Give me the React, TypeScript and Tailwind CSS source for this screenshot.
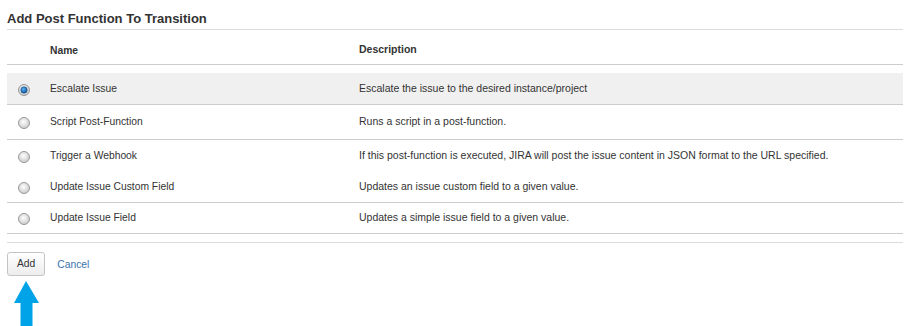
import React, { useState } from 'react';

const rows = [
  { name: 'Escalate Issue', desc: 'Escalate the issue to the desired instance/project', h: 'h-[32px]', border: true },
  { name: 'Script Post-Function', desc: 'Runs a script in a post-function.', h: 'h-[35px]', border: true },
  { name: 'Trigger a Webhook', desc: 'If this post-function is executed, JIRA will post the issue content in JSON format to the URL specified.', h: 'h-[31px]', border: false },
  { name: 'Update Issue Custom Field', desc: 'Updates an issue custom field to a given value.', h: 'h-[32px]', border: true },
  { name: 'Update Issue Field', desc: 'Updates a simple issue field to a given value.', h: 'h-[31px]', border: true },
];

const Radio = ({ checked }: { checked: boolean }) => (
  <svg width="12" height="12" viewBox="0 0 12 12">
    <defs>
      <radialGradient id="off" cx="45%" cy="40%" r="65%">
        <stop offset="0%" stopColor="#ffffff" />
        <stop offset="100%" stopColor="#c4c4c4" />
      </radialGradient>
      <radialGradient id="dot" cx="40%" cy="35%" r="70%">
        <stop offset="0%" stopColor="#5ab0f0" />
        <stop offset="100%" stopColor="#0a4f96" />
      </radialGradient>
    </defs>
    <circle cx="6" cy="6" r="5.5" fill="url(#off)" stroke="#9a9a9a" strokeWidth="1" />
    {checked && <circle cx="6" cy="6" r="3.2" fill="url(#dot)" stroke="#1c4f80" strokeWidth="0.6" />}
  </svg>
);

export default function App() {
  const [selected, setSelected] = useState(0);

  return (
    <div className="w-[909px] h-[326px] bg-white pl-[7px] pr-[6px] text-[10.3px] text-[#333] overflow-hidden" style={{ fontFamily: '"Liberation Sans", Arial, sans-serif' }}>
      <div className="h-[30px] border-b border-[#dcdcdc] flex items-end pb-[4px]">
        <h2 className="text-[13px] font-bold text-[#333] leading-none">Add Post Function To Transition</h2>
      </div>

      {/* header */}
      <div className="h-[35px] border-b border-[#cccccc] flex items-end pb-[6px] font-bold">
        <div className="w-[43px]"></div>
        <div className="w-[309px]">Name</div>
        <div className="text-[10.5px]">Description</div>
      </div>
      <div className="h-[8px]"></div>

      {rows.map((r, i) => (
        <div
          key={r.name}
          onClick={() => setSelected(i)}
          className={`${r.h} flex items-center ${r.border ? 'border-b border-[#cccccc]' : ''} ${selected === i ? 'bg-[#f0f0f0]' : ''}`}
        >
          <div className="w-[43px] flex pl-[11px] pt-[2px]">
            <Radio checked={selected === i} />
          </div>
          <div className="w-[309px]">{r.name}</div>
          <div className="text-[10.5px]">{r.desc}</div>
        </div>
      ))}

      <div className="h-[9px] border-b border-[#dcdcdc]"></div>

      <div className="mt-[9px] flex items-center gap-[12px]">
        <button className="h-[24px] px-[9px] border border-[#c4c4c4] rounded-[3px] bg-gradient-to-b from-white to-[#ededed] text-[10.3px] text-[#333]">Add</button>
        <a className="text-[#3b73af] pt-[1px]" href="#">Cancel</a>
      </div>

      <svg className="mt-[5px] ml-[6px]" width="28" height="45" viewBox="0 0 28 45">
        <polygon points="13,0 26,22 19.5,22 19.5,45 7.5,45 7.5,22 1,22" fill="#00a2e8" />
      </svg>
    </div>
  );
}
